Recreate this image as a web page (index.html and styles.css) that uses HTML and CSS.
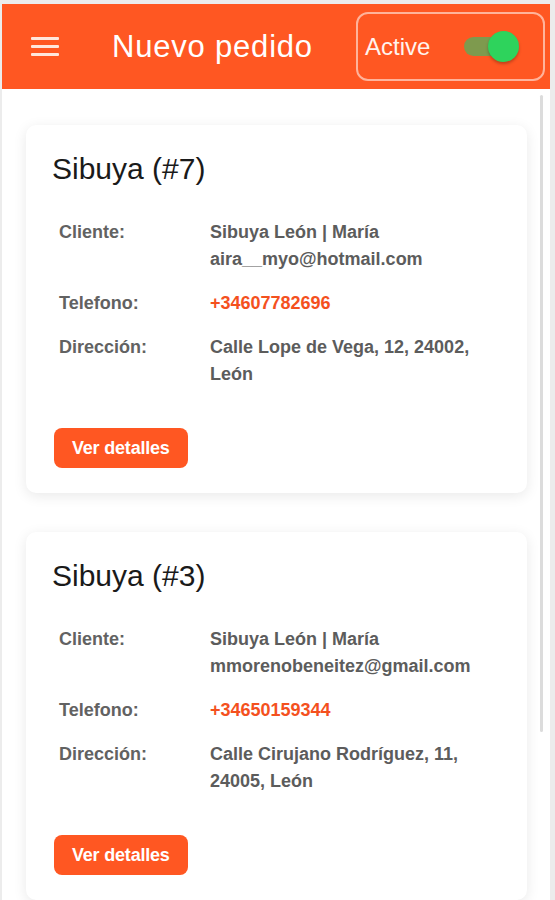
FILE: index.html
```html
<!DOCTYPE html>
<html>
<head>
    <title>Nuevo pedido</title>
    <link rel="stylesheet" href="styles.css">
</head>
<body>
    <div class="app">
        <header class="topbar">
            <button class="menu-btn" aria-label="Menu">
                <span></span><span></span><span></span>
            </button>
            <h1 class="title">Nuevo pedido</h1>
            <div class="status-box">
                <span class="status-label">Active</span>
                <span class="toggle"><span class="toggle-thumb"></span></span>
            </div>
        </header>

        <main class="order-list">
            <div class="order-card">
                <h2>Sibuya (#7)</h2>
                <dl class="order-info">
                    <dt>Cliente:</dt>
                    <dd>Sibuya León | María aira__myo@hotmail.com</dd>
                    <dt>Telefono:</dt>
                    <dd class="phone">+34607782696</dd>
                    <dt>Dirección:</dt>
                    <dd>Calle Lope de Vega, 12, 24002, León</dd>
                </dl>
                <button class="details-btn">Ver detalles</button>
            </div>

            <div class="order-card">
                <h2>Sibuya (#3)</h2>
                <dl class="order-info">
                    <dt>Cliente:</dt>
                    <dd>Sibuya León | María mmorenobeneitez@gmail.com</dd>
                    <dt>Telefono:</dt>
                    <dd class="phone">+34650159344</dd>
                    <dt>Dirección:</dt>
                    <dd>Calle Cirujano Rodríguez, 11, 24005, León</dd>
                </dl>
                <button class="details-btn">Ver detalles</button>
            </div>
        </main>

        <div class="scroll-thumb"></div>
    </div>
</body>
</html>
```

FILE: styles.css
```css
body {
    margin: 0;
    background: #ececec;
    font-family: "Liberation Sans", Arial, sans-serif;
}
.app {
    position: relative;
    margin: 4px 0 0 2px;
    width: 548px;
    height: 896px;
    background: #fff;
    overflow: hidden;
}
.topbar {
    height: 85px;
    background: #ff5722;
    display: flex;
    align-items: center;
    padding: 0 5px 0 29px;
}
.menu-btn {
    background: none;
    border: none;
    padding: 0;
    width: 28px;
    display: flex;
    flex-direction: column;
    gap: 5px;
}
.menu-btn span {
    display: block;
    height: 3px;
    background: #ffe6dc;
    border-radius: 1px;
}
.title {
    margin: 0 0 0 53px;
    color: #fff;
    font-size: 31px;
    font-weight: normal;
    letter-spacing: 0.8px;
}
.status-box {
    box-sizing: border-box;
    margin-left: auto;
    width: 189px;
    height: 69px;
    border: 2px solid rgba(255, 255, 255, 0.55);
    border-radius: 12px;
    display: flex;
    align-items: center;
    padding-left: 7px;
}
.status-label {
    color: #fff3ee;
    font-size: 24px;
}
.toggle {
    position: relative;
    margin-left: 34px;
    width: 46px;
    height: 19px;
    border-radius: 10px;
    background: #7e9a4e;
}
.toggle-thumb {
    position: absolute;
    left: 24px;
    top: -6px;
    width: 31px;
    height: 31px;
    border-radius: 50%;
    background: #2ed35c;
    box-shadow: 0 2px 3px rgba(0, 0, 0, 0.25);
}
.order-list {
    padding: 36px 23px 0 24px;
    display: flex;
    flex-direction: column;
    gap: 39px;
}
.order-card {
    background: #fff;
    border-radius: 10px;
    padding: 26px 26px 25px 26px;
    box-shadow: 0 3px 14px rgba(0, 0, 0, 0.09);
}
.order-card h2 {
    margin: 0;
    font-size: 30px;
    line-height: 36px;
    font-weight: normal;
    color: #1a1a1a;
}
.order-info {
    margin: 32px 0 0 0;
    padding: 0 7px;
    display: grid;
    grid-template-columns: 151px 1fr;
    row-gap: 17px;
    font-size: 18px;
    line-height: 27px;
    font-weight: bold;
}
.order-info dt {
    color: #626262;
}
.order-info dd {
    margin: 0;
    color: #5c5c5c;
}
.order-info .phone {
    color: #f4511e;
}
.details-btn {
    margin: 40px 0 0 2px;
    height: 40px;
    padding: 0 18px;
    border: none;
    border-radius: 8px;
    background: #ff5722;
    color: #fff;
    font-family: "Liberation Sans", Arial, sans-serif;
    font-size: 18px;
    font-weight: bold;
    letter-spacing: -0.2px;
}
.scroll-thumb {
    position: absolute;
    left: 538px;
    top: 91px;
    width: 3px;
    height: 637px;
    border-radius: 2px;
    background: #dcdcdc;
}
```
